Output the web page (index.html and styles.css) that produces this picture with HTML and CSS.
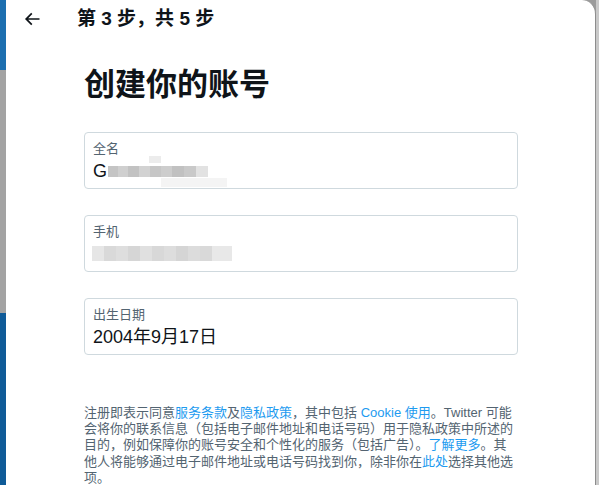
FILE: index.html
```html
<!DOCTYPE html>
<html lang="zh-CN">
<head>
<meta charset="utf-8">
<title>创建你的账号</title>
<link rel="stylesheet" href="styles.css">
</head>
<body>
<div class="backdrop">
  <div class="edge-left"></div>
  <div class="modal">
    <div class="header">
      <svg class="back" viewBox="0 0 24 24" width="20" height="20" aria-hidden="true">
        <path d="M7.414 13l5.043 5.04-1.414 1.42L3.586 12l7.457-7.46 1.414 1.42L7.414 11H21v2H7.414z" fill="#0f1419"/>
      </svg>
      <div class="step">第 3 步，共 5 步</div>
    </div>
    <div class="content">
      <h1 class="title">创建你的账号</h1>
      <div class="field">
        <div class="label">全名</div>
        <div class="value">G<span class="blur blur-name"></span></div>
        <span class="blur-halo halo-a"></span>
        <span class="blur-halo halo-b"></span>
      </div>
      <div class="field">
        <div class="label">手机</div>
        <div class="value"><span class="blur blur-phone"></span></div>
      </div>
      <div class="field">
        <div class="label">出生日期</div>
        <div class="value">2004年9月17日</div>
      </div>
      <p class="terms">注册即表示同意<a>服务条款</a>及<a>隐私政策</a>，其中包括 <a>Cookie 使用</a>。Twitter 可能<br>会将你的联系信息（包括电子邮件地址和电话号码）用于隐私政策中所述的<br>目的，例如保障你的账号安全和个性化的服务（包括广告）。<a>了解更多</a>。其<br>他人将能够通过电子邮件地址或电话号码找到你，除非你在<a>此处</a>选择其他选<br>项。</p>
    </div>
  </div>
  <div class="edge-right"></div>
</div>
</body>
</html>
```

FILE: styles.css
```css
* { box-sizing: border-box; }
html, body {
  margin: 0;
  padding: 0;
  height: 100%;
  overflow: hidden;
}
body {
  font-family: "Liberation Sans", "Noto Sans CJK SC", sans-serif;
  color: #0f1419;
  background: #9b9b9b;
}
.backdrop {
  display: flex;
  height: 485px;
}
.edge-left {
  width: 6px;
  flex: none;
  background: linear-gradient(to bottom, #1d6fb0 0, #1d6fb0 70px, #a3a3a3 70px, #a3a3a3 313px, #0f5b98 313px, #0f5b98 100%);
}
.modal {
  width: 590px;
  flex: none;
  background: #fff;
  border-top-right-radius: 14px;
  border-right: 1px solid #8d8d8d;
  overflow: hidden;
}
.edge-right {
  flex: 1;
  background: #c9c9c9;
}
.header {
  height: 38px;
  display: flex;
  align-items: center;
  padding-left: 16px;
}
.back {
  display: block;
  flex: none;
}
.step {
  margin-left: 35px;
  font-size: 19px;
  font-weight: 700;
  line-height: 24px;
  color: #0f1419;
}
.content {
  padding: 0 77px 0 78px;
}
.title {
  margin: 29px 0 29px;
  font-size: 31px;
  line-height: 36px;
  font-weight: 700;
  color: #0f1419;
}
.field {
  position: relative;
  height: 57px;
  border: 1px solid #cfd9de;
  border-radius: 4px;
  padding: 8px 8px 0;
  margin-bottom: 26px;
}
.label {
  font-size: 13px;
  line-height: 16px;
  color: #536471;
  margin-bottom: 2px;
}
.value {
  font-size: 18px;
  line-height: 24px;
  color: #0f1419;
  display: flex;
  align-items: center;
}
.blur {
  display: inline-block;
}
.blur-name {
  width: 100px;
  height: 11px;
  margin-left: 1px;
  background: linear-gradient(to right,
    #c4c4c4 0, #c4c4c4 10px, #cfcfcf 10px, #cfcfcf 20px,
    #c2c2c2 20px, #c2c2c2 31px, #d2d2d2 31px, #d2d2d2 42px,
    #c6c6c6 42px, #c6c6c6 53px, #cdcdcd 53px, #cdcdcd 64px,
    #c1c1c1 64px, #c1c1c1 76px, #c9c9c9 76px, #c9c9c9 88px,
    #e2e2e2 88px, #e2e2e2 100px);
}
.blur-halo {
  position: absolute;
  background: #ececec;
}
.halo-a {
  left: 64px;
  top: 23px;
  width: 12px;
  height: 7px;
}
.halo-b {
  left: 76px;
  top: 45px;
  width: 66px;
  height: 9px;
  background: #f4f4f4;
}
.blur-phone {
  width: 140px;
  height: 15px;
  margin-left: -1px;
  margin-top: 4px;
  background: linear-gradient(to right,
    #e6e6e6 0, #e6e6e6 12px, #d9d9d9 12px, #d9d9d9 24px,
    #dedede 24px, #dedede 36px, #d6d6d6 36px, #d6d6d6 48px,
    #e0e0e0 48px, #e0e0e0 60px, #d8d8d8 60px, #d8d8d8 72px,
    #dddddd 72px, #dddddd 84px, #d5d5d5 84px, #d5d5d5 96px,
    #dcdcdc 96px, #dcdcdc 108px, #d9d9d9 108px, #d9d9d9 120px,
    #e8e8e8 120px, #e8e8e8 140px);
}
.terms {
  margin: 50px 0 0;
  width: 450px;
  font-size: 13px;
  line-height: 16.2px;
  color: #536471;
}
.terms a {
  color: #1d9bf0;
  text-decoration: none;
}
```
